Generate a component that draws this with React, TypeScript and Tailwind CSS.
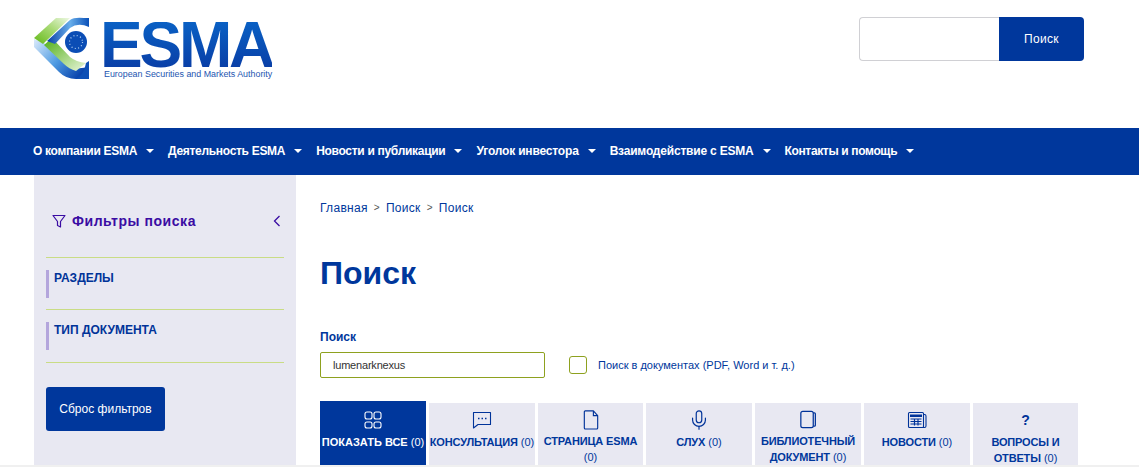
import React from "react";
import { Mic } from "lucide-react";

const navItems = [
  { label: "О компании ESMA", cls: "tracking-[-0.3px]" },
  { label: "Деятельность ESMA", cls: "tracking-[-0.3px]" },
  { label: "Новости и публикации", cls: "tracking-[-0.3px]" },
  { label: "Уголок инвестора", cls: "tracking-[-0.18px]" },
  { label: "Взаимодействие с ESMA", cls: "tracking-[-0.2px]" },
  { label: "Контакты и помощь", cls: "tracking-[-0.35px]" },
];

function Logo() {
  return (
    <div className="flex items-start">
      <svg width="56" height="64" viewBox="0 0 56 64" className="shrink-0">
        <defs>
          <linearGradient id="g1" x1="0" y1="1" x2="1" y2="0">
            <stop offset="0" stopColor="#62b816" />
            <stop offset="0.55" stopColor="#a9da76" />
            <stop offset="1" stopColor="#eef8e4" />
          </linearGradient>
          <linearGradient id="g2" x1="0" y1="0" x2="1" y2="0">
            <stop offset="0" stopColor="#0a3fa8" />
            <stop offset="0.55" stopColor="#68aeea" />
            <stop offset="1" stopColor="#0a50b8" />
          </linearGradient>
          <linearGradient id="g3" x1="0" y1="0" x2="1" y2="0.6">
            <stop offset="0" stopColor="#dcebfb" />
            <stop offset="0.55" stopColor="#4f9be2" />
            <stop offset="1" stopColor="#0b46ae" />
          </linearGradient>
          <linearGradient id="g4" x1="0" y1="0" x2="1" y2="1">
            <stop offset="0" stopColor="#4fae14" />
            <stop offset="1" stopColor="#eaf6dc" />
          </linearGradient>
        </defs>
        <path d="M0 22 L0 30 L25 55 Q32 62 42 62 L55 62 L55 49 Q44 54 34 48 L10 26 Z" fill="url(#g3)" />
        <path d="M0 21 L22 1 L36 1 L9 27 Z" fill="url(#g1)" />
        <path d="M10 28 L18 21 L36 40 Q42 45 52 46 L42 54 Q35 52 30 47 Z" fill="url(#g4)" />
        <path d="M13 24 L36 3 Q40 0 50 1 L55 1 L55 10 Q44 5 36 11 L21 27 Z" fill="url(#g2)" />
        <path d="M52 46 L55 44 L55 62 L42 62 Q50 58 52 46 Z" fill="#0d4fb5" />
        <circle cx="42" cy="25" r="11" fill="#0b4db5" />
        <circle cx="42" cy="25" r="6.5" fill="none" stroke="#b9d6f4" strokeWidth="1.200" strokeDasharray="1 2.400" />
      </svg>
      <div className="ml-[10px] mt-[5px] flex flex-col">
        <span className="text-[64px] leading-[47px] font-bold tracking-[-3.2px] text-transparent bg-clip-text bg-gradient-to-b from-[#0a60c4] to-[#0a3ea6]">ESMA</span>
        <span className="mt-[1px] ml-[4px] text-[8.9px] leading-[9px] text-[#1d55b0] whitespace-nowrap">European Securities and Markets Authority</span>
      </div>
    </div>
  );
}

function Caret() {
  return <span className="ml-[9px] w-0 h-0 border-x-[4px] border-x-transparent border-t-[4px] border-t-white" />;
}

function FilterIcon() {
  return (
    <svg width="14" height="15" viewBox="0 0 14 15" fill="none" stroke="#3a0ca3" strokeWidth="1.200">
      <path d="M1 1.500h12L8.500 7.500v5.500l-3-1.500V7.500z" strokeLinejoin="round" />
    </svg>
  );
}

const iconCls = "h-[22px] w-[22px]";

function GridIcon() {
  return (
    <svg className={iconCls} viewBox="0 0 22 22" fill="none" stroke="#fff" strokeWidth="1.100">
      <rect x="3" y="3" width="7" height="7" rx="2" />
      <rect x="12" y="3" width="7" height="7" rx="2" />
      <rect x="3" y="13" width="7" height="6" rx="2" />
      <rect x="12" y="13" width="7" height="6" rx="2" />
    </svg>
  );
}

function ChatIcon() {
  return (
    <svg className={iconCls} viewBox="0 0 22 22" fill="none" stroke="#003399" strokeWidth="1.100">
      <path d="M2.500 3.500h17v12H7l-4.500 3.500z" strokeLinejoin="round" />
      <path d="M7 9.500h1.500M10.500 9.500H12M14 9.500h1.500" strokeWidth="1.300" />
    </svg>
  );
}

function FileIcon() {
  return (
    <svg className={iconCls} viewBox="0 0 22 22" fill="none" stroke="#003399" strokeWidth="1.200">
      <path d="M5 2h8.500L18 7v13a1 1 0 0 1-1 1H5a1 1 0 0 1-1-1V3a1 1 0 0 1 1-1z" strokeLinejoin="round" />
      <path d="M13.500 2v5H18" />
    </svg>
  );
}

function BookIcon() {
  return (
    <svg className={iconCls} viewBox="0 0 22 22" fill="none" stroke="#003399" strokeWidth="1.300">
      <rect x="3.500" y="2.500" width="13" height="17" rx="2" />
      <path d="M16.500 4h1.200a1 1 0 0 1 1 1v12a1 1 0 0 1-1 1h-1.200" />
    </svg>
  );
}

function NewsIcon() {
  return (
    <svg className={iconCls} viewBox="0 0 22 22" fill="none" stroke="#003399" strokeWidth="1.100">
      <rect x="2.500" y="3.500" width="15" height="15" rx="1" />
      <path d="M17.500 5.500h1a1.500 1.500 0 0 1 1.500 1.500v10a1.500 1.500 0 0 1-1.500 1.500H17" />
      <rect x="4" y="5.500" width="12" height="2.500" fill="#003399" stroke="none" />
      <path d="M4.500 10h11M4.500 12.500h11M4.500 15h11M8.500 9.500v7M12 9.500v7" strokeWidth="1.200" />
    </svg>
  );
}

type Tab = { icon: React.ReactNode; label: string; count: string; w: string };

const tabs: Tab[] = [
  { icon: <ChatIcon />, label: "КОНСУЛЬТАЦИЯ", count: "(0)", w: "w-[106px]" },
  { icon: <FileIcon />, label: "СТРАНИЦА ESMA", count: "(0)", w: "w-[105px]" },
  { icon: <Mic className={iconCls} color="#003399" strokeWidth={1.3} />, label: "СЛУХ", count: "(0)", w: "w-[106px]" },
  { icon: <BookIcon />, label: "БИБЛИОТЕЧНЫЙ ДОКУМЕНТ", count: "(0)", w: "w-[106px]" },
  { icon: <NewsIcon />, label: "НОВОСТИ", count: "(0)", w: "w-[106px]" },
  { icon: <span className="h-[22px] pt-[1px] flex items-center justify-center text-[14px] font-bold text-[#003399]">?</span>, label: "ВОПРОСЫ И ОТВЕТЫ", count: "(0)", w: "w-[105px]" },
];

function SideItem({ label, tall }: { label: string; tall?: boolean }) {
  return (
    <div className={tall ? "h-[53px] border-t border-[#c9dc85] pt-[12px]" : "h-[52px] border-t border-[#c9dc85] pt-[12px]"}>
      <div className="h-[28px] border-l-[3px] border-[#b3a5dc] pl-[5px] pt-[1px] text-[12px] leading-[14px] font-bold text-[#003399]">{label}</div>
    </div>
  );
}

export default function App() {
  return (
    <div className="h-[467px] w-full overflow-hidden bg-white font-['Liberation_Sans',Arial,sans-serif] flex flex-col">
      <header className="h-[128px] shrink-0 flex justify-between pl-[34px] pr-[55px]">
        <div className="pt-[17px]">
          <Logo />
        </div>
        <div className="pt-[17px]">
          <div className="flex h-[44px]">
            <div className="w-[140px] border border-[#d0d0d4] border-r-0 rounded-l-[4px] bg-white" />
            <button className="w-[85px] bg-[#00379c] text-white text-[12px] tracking-[0.3px] rounded-r-[4px]">Поиск</button>
          </div>
        </div>
      </header>

      <nav className="h-[47px] shrink-0 bg-[#00379c] flex items-center pl-[33px] gap-[14px] pb-[1px]">
        {navItems.map((n) => (
          <div key={n.label} className={`flex items-center text-white text-[12px] font-bold ${n.cls}`}>
            {n.label}
            <Caret />
          </div>
        ))}
      </nav>

      <div className="flex-1 min-h-0 flex pl-[34px]">
        <aside className="w-[262px] shrink-0 bg-[#e8e8f2] pl-[12px] pr-[12px]">
          <div className="h-[82px] pt-[38px] pl-[6px] pr-[3px] flex justify-between items-start">
            <div className="flex items-center gap-[6px]">
              <FilterIcon />
              <span className="text-[14px] leading-[16px] font-bold text-[#3a0ca3] tracking-[0.55px]">Фильтры поиска</span>
            </div>
            <svg width="8" height="12" viewBox="0 0 8 12" fill="none" stroke="#3a0ca3" strokeWidth="1.300" className="mt-[2px]">
              <path d="M6.500 1L1.500 6l5 5" />
            </svg>
          </div>
          <SideItem label="РАЗДЕЛЫ" />
          <SideItem label="ТИП ДОКУМЕНТА" tall />
          <div className="border-t border-[#c9dc85] pt-[24px]">
            <button className="w-[119px] h-[44px] rounded-[3px] bg-[#00379c] text-white text-[12px]">Сброс фильтров</button>
          </div>
        </aside>

        <main className="pl-[24px] flex-1 min-w-0">
          <div className="pt-[26px] flex items-center text-[12px] leading-[14px] text-[#00379c] tracking-[0.3px]">
            <span>Главная</span>
            <span className="mx-[6px] text-[#555] text-[10px]">&gt;</span>
            <span>Поиск</span>
            <span className="mx-[6px] text-[#555] text-[10px]">&gt;</span>
            <span>Поиск</span>
          </div>
          <h1 className="mt-[40px] text-[32px] leading-[37px] font-bold text-[#00379c]">Поиск</h1>
          <div className="mt-[38px] text-[12px] leading-[14px] font-bold text-[#00379c]">Поиск</div>
          <div className="mt-[8px] flex items-center">
            <div className="w-[225px] h-[26px] border border-[#8ea11f] rounded-[2px] pl-[12px] flex items-center text-[11px] tracking-[-0.2px] text-[#333]">lumenarknexus</div>
            <span className="ml-[24px] w-[18px] h-[18px] border border-[#8ea11f] rounded-[3px]" />
            <span className="ml-[11px] text-[11px] text-[#00379c]">Поиск в документах (PDF, Word и т. д.)</span>
          </div>
          <div className="mt-[23px] h-[64px] flex items-end gap-[3px]">
            <div className="w-[106px] h-[64px] bg-[#00379c] text-white flex flex-col items-center pt-[8px]">
              <GridIcon />
              <div className="mt-[3px] text-[11px] leading-[16px] text-center whitespace-nowrap">
                <b>ПОКАЗАТЬ ВСЕ</b> (0)
              </div>
            </div>
            {tabs.map((t) => (
              <div key={t.label} className={`${t.w} h-[62px] bg-[#e8e8f2] text-[#00379c] flex flex-col items-center pt-[6px]`}>
                {t.icon}
                <div className="mt-[3px] text-[11px] leading-[16px] text-center">
                  <b className="tracking-[-0.15px]">{t.label}</b> <span>{t.count}</span>
                </div>
              </div>
            ))}
          </div>
        </main>
      </div>
      <div className="h-[2px] shrink-0 bg-[#f0f0f0]" />
    </div>
  );
}
